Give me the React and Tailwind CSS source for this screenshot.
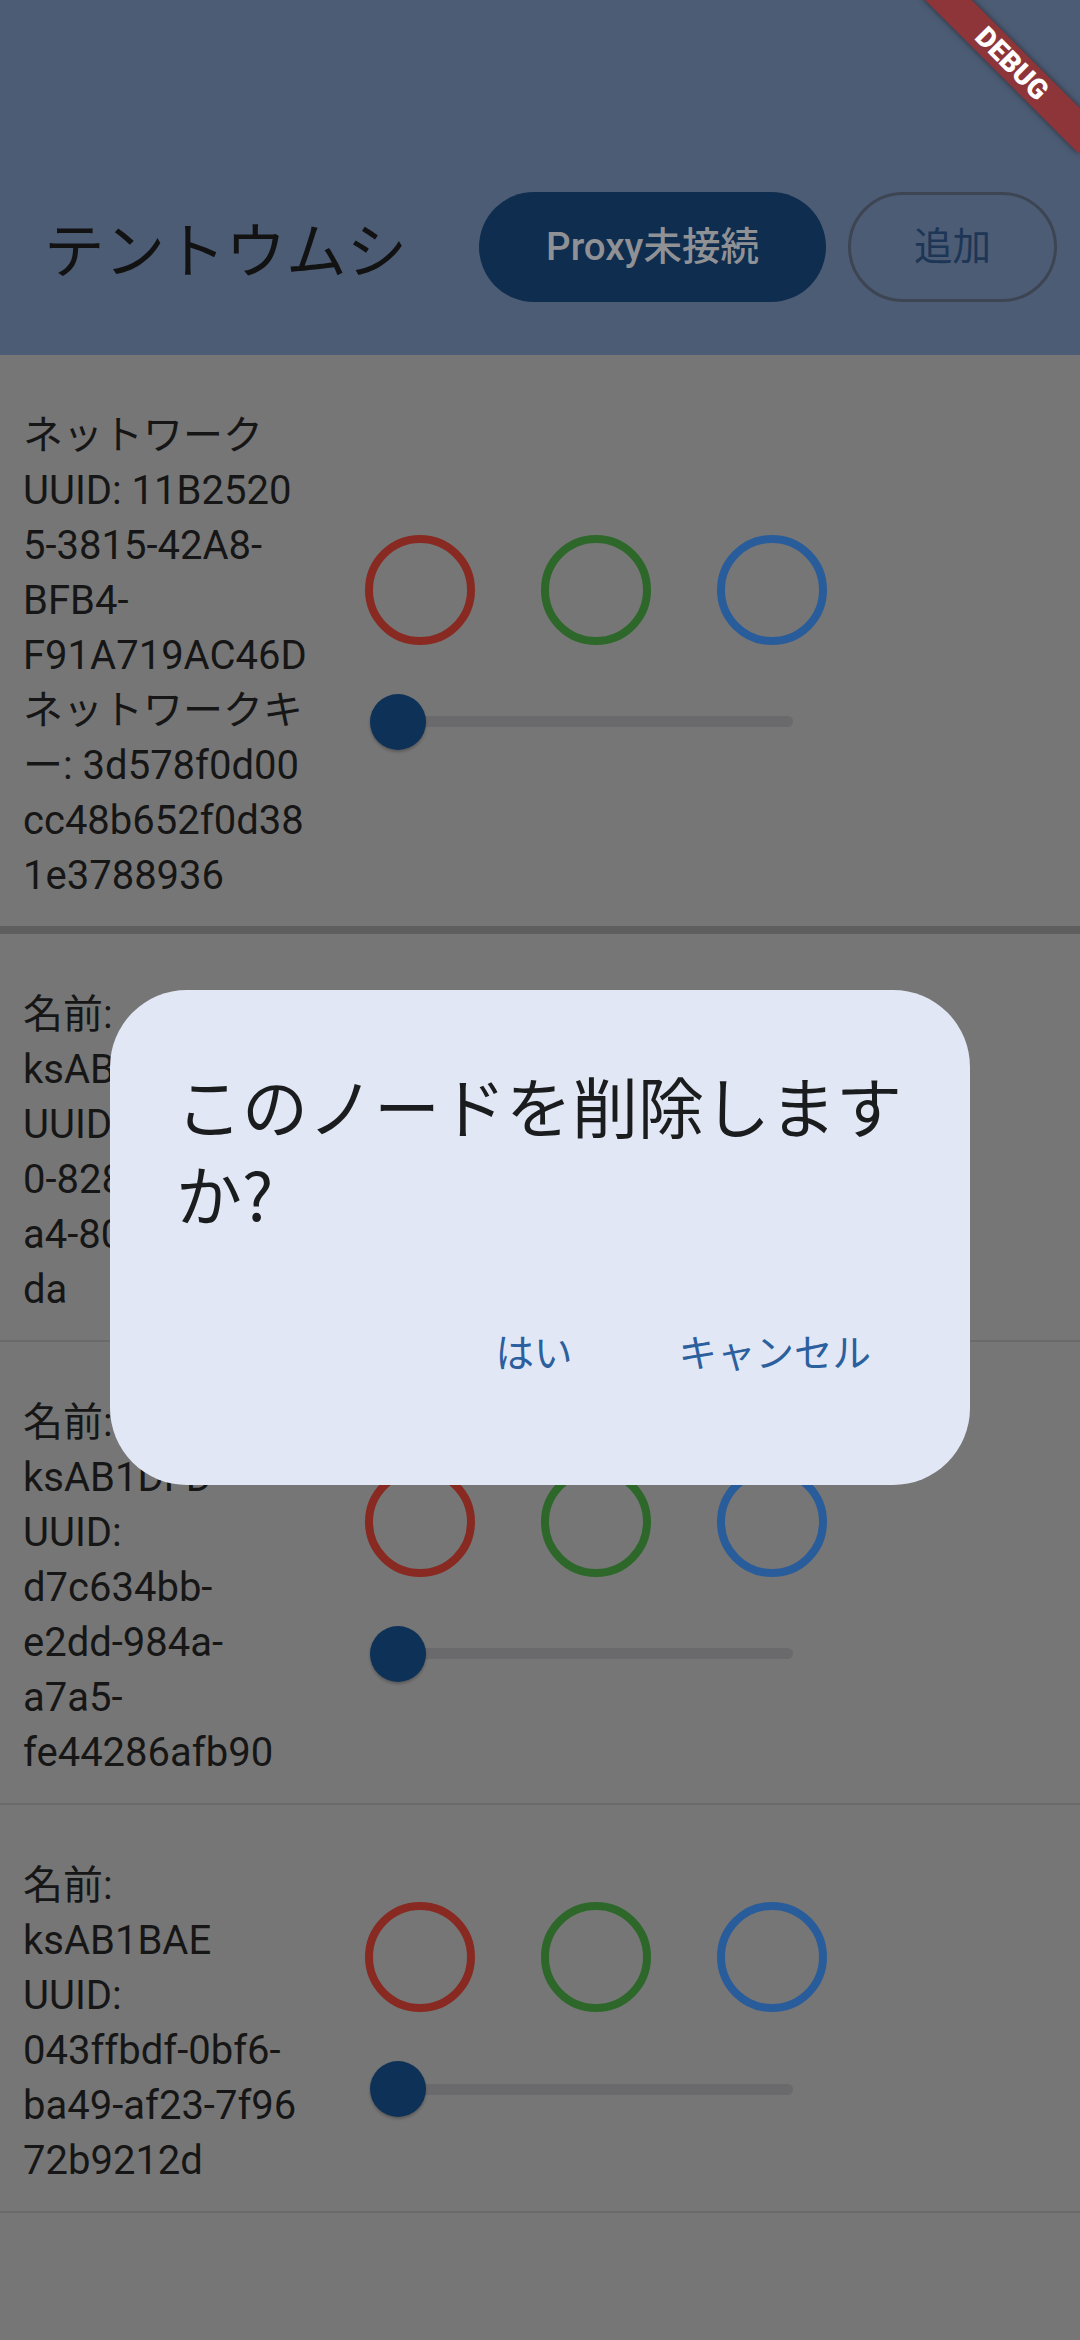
import React from 'react'

const NODES = [
  {
    lines: ['ネットワーク', 'UUID: 11B2520', '5-3815-42A8-', 'BFB4-', 'F91A719AC46D', 'ネットワークキ', 'ー: 3d578f0d00', 'cc48b652f0d38', '1e3788936'],
    divider: 'border-b-[8px] border-[#5f5f5f]',
  },
  {
    lines: ['名前:', 'ksAB1C4A', 'UUID: 5c1e7a2', '0-8281-4b3f-', 'a4-80d2e91c3f', 'da'],
    divider: 'border-b-2 border-[#6a6a6a]',
  },
  {
    lines: ['名前:', 'ksAB1DFD', 'UUID:', 'd7c634bb-', 'e2dd-984a-', 'a7a5-', 'fe44286afb90'],
    divider: 'border-b-2 border-[#6a6a6a]',
  },
  {
    lines: ['名前:', 'ksAB1BAE', 'UUID:', '043ffbdf-0bf6-', 'ba49-af23-7f96', '72b9212d'],
    divider: 'border-b-2 border-[#6a6a6a]',
  },
]

const Ring = ({ color }) => (
  <div className={`w-[110px] h-[110px] rounded-full border-[8px] ${color}`} />
)

const NodeRow = ({ node }) => (
  <div className={`flex items-center pt-[53px] pb-[23px] ${node.divider}`}>
    {/* info text */}
    <div className="w-[343px] pl-[23px] text-[40px] leading-[55px] text-[#161616]">
      {node.lines.map((l, i) => (
        <div key={i} className="whitespace-nowrap">{l}</div>
      ))}
    </div>

    {/* colour toggles + brightness */}
    <div className="flex flex-col pt-[11px] ml-[22px]">
      <div className="flex gap-[66px]">
        <Ring color="border-[#882a22]" />
        <Ring color="border-[#2d682a]" />
        <Ring color="border-[#295c9a]" />
      </div>
      <div className="relative mt-[11px] h-[132px] w-[428px] flex items-center">
        <div className="ml-[33px] h-[11px] w-[395px] rounded-full bg-[#6a6a6c]" />
        <div className="absolute left-[5px] top-[38px] w-[56px] h-[56px] rounded-full bg-[#0d3157] shadow-[0_2px_3px_rgba(0,0,0,0.25)]" />
      </div>
    </div>
  </div>
)

export default function App() {
  return (
    <div className="relative w-[1080px] h-[2340px] overflow-hidden bg-[#767676] font-[Roboto,'Noto_Sans_CJK_JP',sans-serif]">
      {/* App bar */}
      <header className="h-[355px] bg-[#4c5c74] pt-[170px]">
        <div className="h-[154px] flex items-center pl-[44px] pr-[23px]">
          <h1 className="flex-1 text-[60.5px] leading-none text-[#121212] font-['Noto_Sans_CJK_JP',sans-serif]">テントウムシ</h1>
          <button className="h-[110px] w-[347px] rounded-full bg-[#0f2d4f] text-[38.5px] font-medium text-[#8f9195]">
            Proxy未接続
          </button>
          <button className="ml-[22px] h-[110px] w-[209px] rounded-full border-[3px] border-[#3d4553] text-[38.5px] text-[#1d3656]">
            追加
          </button>
        </div>
      </header>

      {/* Node list */}
      <div>
        {NODES.map((n, i) => <NodeRow key={i} node={n} />)}
      </div>

      {/* Delete dialog */}
      <div className="absolute left-[110px] top-[990px] w-[860px] h-[495px] rounded-[77px] bg-[#e1e7f4] pt-[70px] px-[66px] flex flex-col">
        <p className="text-[66px] leading-[88px] text-[#1a1c1e] font-['Noto_Sans_CJK_JP',sans-serif]">
          このノードを削除します<br />か?
        </p>
        <div className="mt-[63px] flex justify-end gap-[40px]">
          <button className="h-[110px] px-[33px] text-[38.5px] text-[#2c5f9e]">はい</button>
          <button className="h-[110px] px-[33px] text-[38.5px] text-[#2c5f9e]">キャンセル</button>
        </div>
      </div>

      {/* Debug banner */}
      <div className="absolute left-[902px] top-[47px] w-[220px] h-[33px] rotate-45 bg-[#8e3539] shadow-[0_0_6px_rgba(0,0,0,0.5)] flex items-center justify-center">
        <span className="text-[28px] leading-none font-black text-white font-[Roboto,sans-serif]">DEBUG</span>
      </div>
    </div>
  )
}
